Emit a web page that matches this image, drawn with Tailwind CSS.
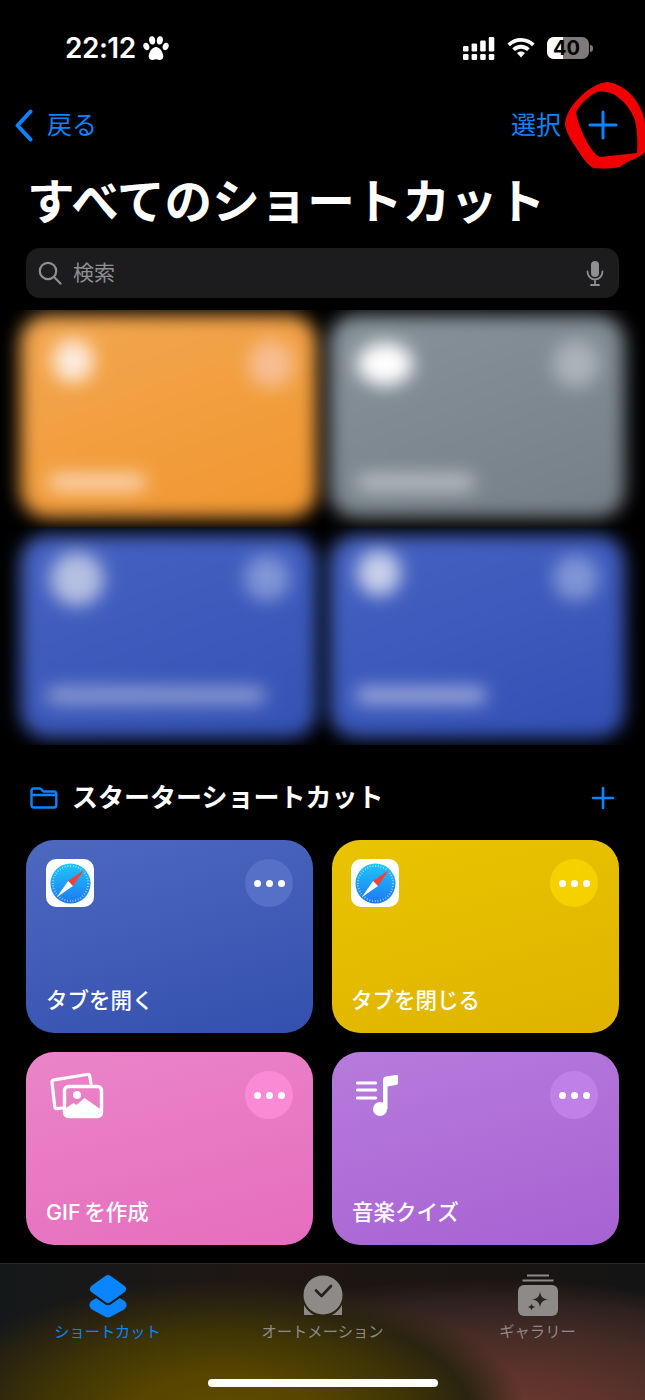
<!DOCTYPE html>
<html lang="ja">
<head>
  <meta charset="UTF-8">
  <meta name="viewport" content="width=device-width, initial-scale=1.0">
  <title>すべてのショートカット</title>
  <script src="https://cdn.jsdelivr.net/npm/@tailwindcss/browser@4"></script>
</head>
<body class="bg-black">
  <div class="relative w-[645px] h-[1400px] overflow-hidden flex flex-col bg-black text-white font-['Inter','Noto_Sans_CJK_JP',sans-serif]">

    <!-- Status bar -->
    <div class="h-[96px] shrink-0 flex items-start justify-between pt-[33px] pl-[65px] pr-[52px]">
      <div class="flex items-center gap-[7px] h-[30px]">
        <span class="text-[28px] leading-[30px] font-semibold tracking-[-0.5px]">22:12</span>
        <svg class="w-[26px] h-[25px]" viewBox="0 0 25 24" fill="white">
          <ellipse cx="3.2" cy="10" rx="2.8" ry="3.6" transform="rotate(-18 3.2 10)"/>
          <ellipse cx="8.8" cy="4.2" rx="2.9" ry="3.9" transform="rotate(-8 8.8 4.2)"/>
          <ellipse cx="16.2" cy="4.2" rx="2.9" ry="3.9" transform="rotate(8 16.2 4.2)"/>
          <ellipse cx="21.8" cy="10" rx="2.8" ry="3.6" transform="rotate(18 21.8 10)"/>
          <path d="M12.5 10.5c-3.4 0-7 5-7 9 0 2.8 2.4 4 4.2 3.5 1-.3 1.8-.6 2.8-.6s1.8.3 2.8.6c1.8.5 4.2-.7 4.2-3.5 0-4-3.6-9-7-9z"/>
        </svg>
      </div>
      <div class="flex items-center gap-[12px] h-[30px]">
        <svg class="w-[32px] h-[23px]" viewBox="0 0 32 23" fill="white">
          <rect x="0" y="17" width="5.5" height="6" rx="1.2"/><rect x="8.6" y="17" width="5.5" height="6" rx="1.2"/><rect x="17.2" y="17" width="5.5" height="6" rx="1.2"/><rect x="25.8" y="17" width="5.5" height="6" rx="1.2"/>
          <rect x="0" y="9" width="5.5" height="5.5" rx="1.2"/><rect x="8.6" y="6.5" width="5.5" height="8" rx="1.2"/><rect x="17.2" y="3.5" width="5.5" height="11" rx="1.2"/><rect x="25.8" y="0" width="5.5" height="14.5" rx="1.2"/>
        </svg>
        <svg class="w-[28px] h-[20px]" viewBox="0 0 28 20" fill="white">
          <path d="M14 0C8.7 0 3.9 2.1.4 5.6l2.6 2.7C5.8 5.500 9.700 3.800 14 3.800s8.200 1.700 11 4.500l2.600-2.700C24.100 2.100 19.300 0 14 0z"/>
          <path d="M14 6.800c-3.400 0-6.500 1.400-8.700 3.600l2.700 2.700C9.500 11.600 11.600 10.700 14 10.700s4.500.9 6 2.400l2.700-2.700C20.500 8.200 17.400 6.800 14 6.800z"/>
          <path d="M14 13.500c-1.600 0-3 .6-4 1.600l4 4.500 4-4.500c-1-1-2.400-1.600-4-1.600z"/>
        </svg>
        <div class="flex items-center gap-[1px]">
          <div class="relative w-[42px] h-[22px] rounded-[7px] overflow-hidden flex bg-[#7f7b79]">
            <div class="w-[16px] bg-white"></div>
            <span class="absolute inset-0 pr-[3px] text-center text-black text-[20px] leading-[22px] font-bold">40</span>
          </div>
          <div class="w-[3px] h-[7px] rounded-r-full bg-[#7f7b79]"></div>
        </div>
      </div>
    </div>

    <!-- Nav row -->
    <div class="h-[58px] shrink-0 flex items-center justify-between pl-[15px] pr-[27px] text-[#0a84ff]">
      <div class="flex items-center gap-[14px]">
        <svg class="w-[18px] h-[33px]" viewBox="0 0 18 33" fill="none" stroke="#0a84ff" stroke-width="4" stroke-linecap="round" stroke-linejoin="round"><path d="M15.500 2.500 2.500 16.500l13 14"/></svg>
        <span class="text-[25px] leading-[32px]">戻る</span>
      </div>
      <div class="flex items-center gap-[27px]">
        <span class="text-[25px] leading-[32px]">選択</span>
        <svg class="w-[30px] h-[30px]" viewBox="0 0 30 30" stroke="#0a84ff" stroke-width="3" stroke-linecap="round"><path d="M15 2v26M2 15h26"/></svg>
      </div>
    </div>

    <!-- Title -->
    <h1 class="shrink-0 mt-[16px] h-[66px] pl-[27px] text-[47.6px] leading-[64px] font-bold whitespace-nowrap">すべてのショートカット</h1>

    <!-- Search -->
    <div class="shrink-0 mx-[26px] mt-[12px] h-[50px] rounded-[14px] bg-[#1c1c1e] flex items-center pl-[12px] pr-[15px] text-[#8e8e93]">
      <svg class="w-[24px] h-[24px]" viewBox="0 0 24 24" fill="none" stroke="#8e8e93" stroke-width="2.200" stroke-linecap="round"><circle cx="10" cy="10" r="8.200"/><path d="M16 16l6.500 6.500"/></svg>
      <span class="ml-[11px] text-[21px] leading-[28px]">検索</span>
      <svg class="ml-auto w-[18px] h-[25px]" viewBox="0 0 18 25" fill="none" stroke="#8e8e93" stroke-width="1.800" stroke-linecap="round"><rect x="5" y="0" width="8" height="16" rx="4" fill="#8e8e93" stroke="none"/><path d="M1.500 10.500c0 4.500 3.200 8 7.500 8s7.500-3.500 7.500-8M9 18.500v4.500M5 24h8"/></svg>
    </div>

    <!-- Blurred shortcuts -->
    <div class="shrink-0 mt-[12px] h-[217px] overflow-hidden pt-[5px] px-[20px] grid grid-cols-2 gap-x-[12px] content-start">
      <div class="relative h-[203px] rounded-[28px] blur-[9px] bg-[linear-gradient(160deg,#f3a750,#f0962f)]">
        <div class="absolute left-[32px] top-[24px] w-[42px] h-[44px] rounded-[50%] bg-[#fdeadc]"></div>
        <div class="absolute left-[228px] top-[25px] w-[46px] h-[48px] rounded-full bg-[#f7bd90]"></div>
        <div class="absolute left-[28px] top-[159px] w-[98px] h-[17px] rounded-full bg-[#fcd6b4]"></div>
      </div>
      <div class="relative h-[203px] rounded-[28px] blur-[9px] bg-[linear-gradient(160deg,#87929a,#757f87)]">
        <div class="absolute left-[28px] top-[27px] w-[56px] h-[44px] rounded-[50%] bg-[#ffffff]"></div>
        <div class="absolute left-[224px] top-[25px] w-[46px] h-[48px] rounded-full bg-[#abb3ba]"></div>
        <div class="absolute left-[28px] top-[159px] w-[118px] h-[17px] rounded-full bg-[#b9c0c5]"></div>
      </div>
    </div>
    <div class="shrink-0 h-[218px] overflow-hidden pt-[8px] px-[20px] grid grid-cols-2 gap-x-[12px] content-start">
      <div class="relative h-[203px] rounded-[28px] blur-[9px] bg-[linear-gradient(160deg,#4663c2,#3452b5)]">
        <div class="absolute left-[30px] top-[17px] w-[54px] h-[54px] rounded-[50%] bg-[#b6bfe2]"></div>
        <div class="absolute left-[224px] top-[20px] w-[46px] h-[46px] rounded-full bg-[#8195d6]"></div>
        <div class="absolute left-[26px] top-[152px] w-[220px] h-[17px] rounded-full bg-[#919dd4]"></div>
      </div>
      <div class="relative h-[203px] rounded-[28px] blur-[9px] bg-[linear-gradient(160deg,#4663c2,#3250b5)]">
        <div class="absolute left-[28px] top-[15px] w-[44px] h-[46px] rounded-[50%] bg-[#c9d0ea]"></div>
        <div class="absolute left-[224px] top-[20px] w-[46px] h-[46px] rounded-full bg-[#8195d6]"></div>
        <div class="absolute left-[26px] top-[152px] w-[132px] h-[17px] rounded-full bg-[#9fa9dc]"></div>
      </div>
    </div>

    <!-- Section header -->
    <div class="shrink-0 mt-[35px] h-[36px] flex items-center pl-[30px] pr-[30px]">
      <svg class="w-[28px] h-[22px]" viewBox="0 0 28 22" fill="none" stroke="#0a84ff" stroke-width="2.400" stroke-linejoin="round"><path d="M1.500 6V3.500C1.500 2.300 2.300 1.500 3.500 1.500h6c.8 0 1.300.3 1.800.8l2 2.200h10.500c1.500 0 2.500 1 2.500 2.500v11c0 1.500-1 2.500-2.500 2.500H4c-1.500 0-2.500-1-2.500-2.500V6zM1.500 8h25"/></svg>
      <h2 class="ml-[14px] text-[26px] leading-[36px] font-semibold whitespace-nowrap">スターターショートカット</h2>
      <svg class="ml-auto w-[24px] h-[24px]" viewBox="0 0 24 24" stroke="#0a84ff" stroke-width="2.600" stroke-linecap="round"><path d="M12 2v20M2 12h20"/></svg>
    </div>

    <!-- Starter shortcuts -->
    <div class="shrink-0 mt-[24px] px-[26px] grid grid-cols-2 gap-x-[19px] gap-y-[19px]">

      <div class="h-[193px] rounded-[28px] p-[20px] pt-[19px] flex flex-col justify-between bg-[linear-gradient(165deg,#4d68bf,#3350ae)]">
        <div class="flex justify-between">
          <div class="w-[48px] h-[48px] rounded-[10px] bg-white flex items-center justify-center">
            <svg class="w-[41px] h-[41px]" viewBox="0 0 42 42">
              <defs><linearGradient id="sa" x1="0" y1="0" x2="0" y2="1"><stop offset="0" stop-color="#1fc6fc"/><stop offset="1" stop-color="#1d78f2"/></linearGradient></defs>
              <circle cx="21" cy="21" r="20.500" fill="url(#sa)"/>
              <circle cx="21" cy="21" r="18" fill="none" stroke="#ffffff" stroke-opacity="0.700" stroke-width="2" stroke-dasharray="0.700 2.100"/>
              <polygon points="35,7 18.500,18.500 23.500,23.500" fill="#f5403a"/>
              <polygon points="7,35 18.500,18.500 23.500,23.500" fill="#ffffff"/>
            </svg>
          </div>
          <div class="w-[48px] h-[48px] rounded-full bg-[#5570c6] flex items-center justify-center gap-[5px]">
            <span class="w-[7px] h-[7px] rounded-full bg-white"></span><span class="w-[7px] h-[7px] rounded-full bg-white"></span><span class="w-[7px] h-[7px] rounded-full bg-white"></span>
          </div>
        </div>
        <p class="text-[21.5px] leading-[28px] font-medium -mb-[1px]">タブを開く</p>
      </div>

      <div class="h-[193px] rounded-[28px] pl-[19px] pr-[21px] py-[20px] pt-[19px] flex flex-col justify-between bg-[linear-gradient(165deg,#e9c400,#dfb300)]">
        <div class="flex justify-between">
          <div class="w-[48px] h-[48px] rounded-[10px] bg-white flex items-center justify-center">
            <svg class="w-[41px] h-[41px]" viewBox="0 0 42 42">
              <defs><linearGradient id="sb" x1="0" y1="0" x2="0" y2="1"><stop offset="0" stop-color="#1fc6fc"/><stop offset="1" stop-color="#1d78f2"/></linearGradient></defs>
              <circle cx="21" cy="21" r="20.500" fill="url(#sb)"/>
              <circle cx="21" cy="21" r="18" fill="none" stroke="#ffffff" stroke-opacity="0.700" stroke-width="2" stroke-dasharray="0.700 2.100"/>
              <polygon points="35,7 18.500,18.500 23.500,23.500" fill="#f5403a"/>
              <polygon points="7,35 18.500,18.500 23.500,23.500" fill="#ffffff"/>
            </svg>
          </div>
          <div class="w-[48px] h-[48px] rounded-full bg-[#f6d100] flex items-center justify-center gap-[5px]">
            <span class="w-[7px] h-[7px] rounded-full bg-white"></span><span class="w-[7px] h-[7px] rounded-full bg-white"></span><span class="w-[7px] h-[7px] rounded-full bg-white"></span>
          </div>
        </div>
        <p class="text-[21.5px] leading-[28px] font-medium -mb-[1px]">タブを閉じる</p>
      </div>

      <div class="h-[193px] rounded-[28px] p-[20px] pt-[19px] flex flex-col justify-between bg-[linear-gradient(165deg,#eb84c8,#e56ebe)]">
        <div class="flex justify-between">
          <svg class="w-[58px] h-[48px]" viewBox="0 0 58 48" fill="none">
            <path d="M16 37 11.500 37.700C10 37.900 9 37.200 8.800 35.700L6 11.500C5.800 10 6.500 9 8 8.800L41 3.500C42.500 3.300 43.500 4 43.800 5.500L45 12.500" stroke="white" stroke-width="3.200" stroke-linejoin="round" stroke-linecap="round"/>
            <rect x="18.500" y="15.500" width="37" height="30" rx="4" stroke="white" stroke-width="3.400"/>
            <circle cx="31" cy="24" r="4" fill="white"/>
            <path d="M18.500 38l9-6 3 2 8-7 17 12v3c0 2-1.500 3.500-3.500 3.500H22c-2 0-3.500-1.500-3.500-3.500z" fill="white"/>
          </svg>
          <div class="w-[48px] h-[48px] rounded-full bg-[#fa8ad6] flex items-center justify-center gap-[5px]">
            <span class="w-[7px] h-[7px] rounded-full bg-white"></span><span class="w-[7px] h-[7px] rounded-full bg-white"></span><span class="w-[7px] h-[7px] rounded-full bg-white"></span>
          </div>
        </div>
        <p class="text-[21.5px] leading-[28px] font-medium -mb-[1px] [word-spacing:-2px]">GIF を作成</p>
      </div>

      <div class="h-[193px] rounded-[28px] pl-[20px] pr-[21px] py-[20px] pt-[19px] flex flex-col justify-between bg-[linear-gradient(165deg,#b67bdc,#a762d2)]">
        <div class="flex justify-between">
          <svg class="w-[48px] h-[48px]" viewBox="0 0 48 48" fill="white">
            <rect x="4" y="10.500" width="21" height="3" rx="1.200"/><rect x="4" y="17.500" width="21" height="3" rx="1.200"/><rect x="4" y="25.500" width="21" height="3" rx="1.200"/>
            <circle cx="28" cy="38" r="7"/>
            <path d="M31 38V9c0-2 1-3 3-3.500L44 4c1.500-.2 2 0 2 2v6c0 1-.5 1.500-1.500 1.700L35.500 15.500V38z"/>
          </svg>
          <div class="w-[48px] h-[48px] rounded-full bg-[#bf80e8] flex items-center justify-center gap-[5px]">
            <span class="w-[7px] h-[7px] rounded-full bg-white"></span><span class="w-[7px] h-[7px] rounded-full bg-white"></span><span class="w-[7px] h-[7px] rounded-full bg-white"></span>
          </div>
        </div>
        <p class="text-[21.5px] leading-[28px] font-medium -mb-[1px]">音楽クイズ</p>
      </div>
    </div>

    <!-- Tab bar -->
    <div class="mt-auto h-[137px] shrink-0 relative border-t border-[#2a2a2a] bg-[#191614] bg-[radial-gradient(ellipse_300px_135px_at_225px_150px,#5e4c00_0%,#574500_30%,#3f3505_60%,#2a2410_82%,transparent_100%),radial-gradient(ellipse_400px_140px_at_490px_155px,#6e3a30_0%,#5c332b_35%,#452b26_62%,#2e211e_85%,transparent_100%),linear-gradient(90deg,#15181a,#1e1713_40%,#1a1513_75%,#141414)]">
      <div class="grid grid-cols-3 pt-[8px]">
        <div class="flex flex-col items-center">
          <svg class="w-[42px] h-[47px]" viewBox="0 0 42 47" fill="#0a84ff" stroke-linejoin="round">
            <polygon points="21,26 34,33 21,40 8,33" stroke="#0a84ff" stroke-width="11"/>
            <polygon points="21,7 35,17 21,27 7,17" stroke="#1e1a14" stroke-width="12"/>
            <polygon points="21,7 35,17 21,27 7,17" stroke="#0a84ff" stroke-width="8"/>
          </svg>
          <span class="mt-[2px] text-[15.2px] leading-[22px] text-[#0a84ff] whitespace-nowrap">ショートカット</span>
        </div>
        <div class="flex flex-col items-center">
          <svg class="w-[42px] h-[47px]" viewBox="0 0 42 47">
            <path d="M2 33 2 43H12C8 41 4 37 2 33zM40 33 40 43H30C34 41 38 37 40 33z" fill="#8e8a88"/>
            <circle cx="21" cy="23" r="19.500" fill="#8e8a88"/>
            <path d="M14 18.500l5.500 5.500L29 14" fill="none" stroke="#26211f" stroke-width="2.600" stroke-linecap="round" stroke-linejoin="round"/>
          </svg>
          <span class="mt-[2px] text-[15.3px] leading-[22px] text-[#8e8a88] whitespace-nowrap">オートメーション</span>
        </div>
        <div class="flex flex-col items-center">
          <svg class="w-[42px] h-[47px]" viewBox="0 0 42 47" fill="#8e8a88">
            <rect x="10" y="2.500" width="22" height="2"/>
            <rect x="5.500" y="7.500" width="31" height="2"/>
            <rect x="1" y="13" width="40" height="31" rx="6"/>
            <path d="M23 19c.4 5.500 2.700 8 8.500 8.500-5.800.5-8.100 3-8.500 8.500-.4-5.500-2.700-8-8.500-8.500 5.800-.5 8.100-3 8.500-8.500z" fill="#2a2420"/>
            <path d="M14.500 31c.2 2.500 1.200 3.700 4 4-2.800.3-3.800 1.500-4 4-.2-2.500-1.200-3.700-4-4 2.800-.3 3.800-1.500 4-4z" fill="#2a2420"/>
          </svg>
          <span class="mt-[2px] text-[15.3px] leading-[22px] text-[#8e8a88] whitespace-nowrap">ギャラリー</span>
        </div>
      </div>
      <div class="absolute left-[208px] bottom-[13px] w-[230px] h-[8px] rounded-full bg-white"></div>
    </div>

    <!-- Red marker scribble round the plus button -->
    <svg class="absolute left-0 top-0 w-[645px] h-[200px] pointer-events-none" viewBox="0 0 645 200">
      <path fill="#f00000" fill-rule="evenodd" d="M607 82C618 83 628 90 634 98 640 106 645 116 645 125V152C640 158 628 160 620 167 610 169 600 169 593 168 585 163 579 152 573 143 569 136 565 130 565 123 566 114 572 105 578 99 586 91 596 83 607 82ZM597 92C590 95 581 103 576 112 577 120 581 130 586 140 590 148 595 155 600 157 612 156 625 154 637 153 638 142 637 130 635 120 631 110 624 100 613 94 608 92 602 91 597 92Z"/>
    </svg>
  </div>
</body>
</html>
